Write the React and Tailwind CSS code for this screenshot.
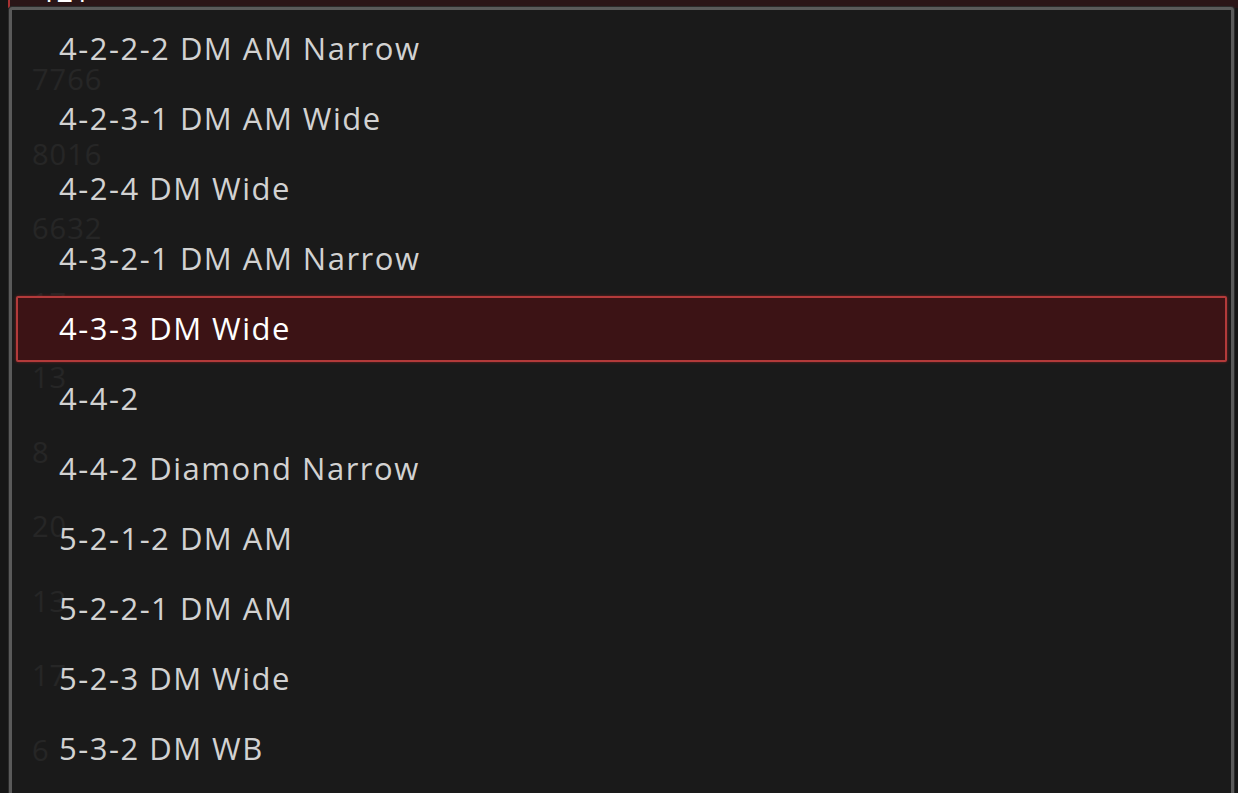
const FORMATIONS = [
  "4-2-2-2 DM AM Narrow",
  "4-2-3-1 DM AM Wide",
  "4-2-4 DM Wide",
  "4-3-2-1 DM AM Narrow",
  "4-3-3 DM Wide",
  "4-4-2",
  "4-4-2 Diamond Narrow",
  "5-2-1-2 DM AM",
  "5-2-2-1 DM AM",
  "5-2-3 DM Wide",
  "5-3-2 DM WB",
];

const SELECTED = "4-3-3 DM Wide";

// faint values of the table behind the menu
const BEHIND = ["7766", "8016", "6632", "17", "13", "8", "20", "13", "17", "6"];

export default function App() {
  return (
    <div
      className="relative w-[1238px] h-[793px] overflow-hidden bg-[#161616]"
      style={{ fontFamily: "'Open Sans', 'Noto Sans', sans-serif" }}
    >
      {/* table underneath */}
      <div className="flex flex-col">
        <div className="h-[8px] ml-[8px] bg-[#2a1517] border-l-2 border-[#a83232] overflow-hidden relative">
          <span className="absolute left-[30px] -top-[24px] text-[29px] leading-none text-white">121</span>
        </div>
        <div className="flex flex-col pt-[56px]">
          {BEHIND.map((v, i) => (
            <div key={i} className="h-[74.5px] pl-[32px] text-[29px] leading-none tracking-[1px] text-[#727272]">
              {v}
            </div>
          ))}
        </div>
      </div>

      {/* dropdown menu */}
      <div className="absolute left-[9px] top-[7px] right-[4px] -bottom-[20px] border-[3px] border-[#5a5a5a] rounded-[3px] bg-[#1b1b1b]/[0.88] shadow-[0_0_0_1px_#2a2a2a]">
        <ul className="flex flex-col pt-[4px] px-[4px]">
          {FORMATIONS.map((f) => {
            const sel = f === SELECTED;
            return (
              <li key={f} className="h-[70px] py-[2px] flex">
                <div
                  className={
                    sel
                      ? "flex-1 flex items-center pl-[41px] rounded-[2px] border-2 border-[#b33a3a] bg-[#3c1315] shadow-[0_0_3px_#7a2222] text-white"
                      : "flex-1 flex items-center pl-[43px] text-[#d2d2d2]"
                  }
                >
                  <span className="text-[31px] leading-none tracking-[1.5px] -mt-[2px]">{f}</span>
                </div>
              </li>
            );
          })}
        </ul>
      </div>
    </div>
  );
}
